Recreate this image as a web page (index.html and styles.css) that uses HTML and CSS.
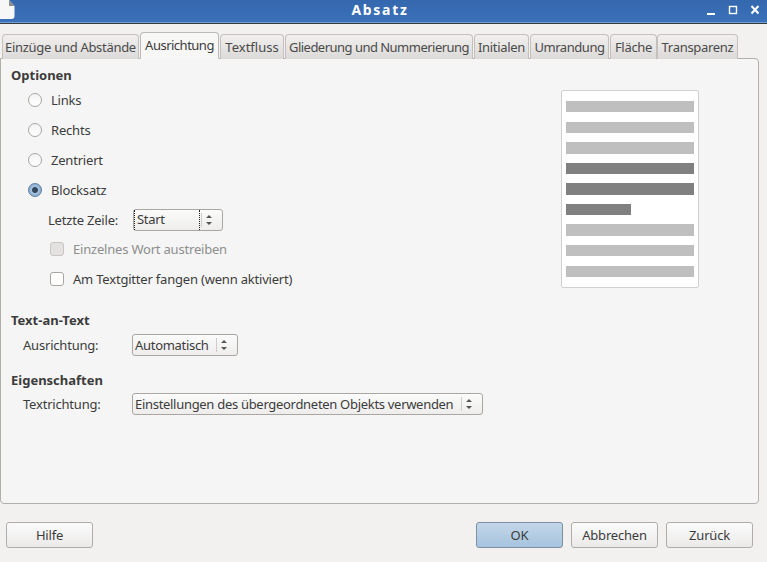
FILE: index.html
```html
<!DOCTYPE html>
<html>
  <head>
    <meta charset="utf-8">
    <title>Absatz</title>
    <link rel="stylesheet" href="styles.css">
  </head>
  <body class="body">
    <header class="titlebar">
      <svg class="app-icon" width="15" height="20" viewBox="0 0 15 20"><path d="M0 0H9L14.5 6V16Q14.5 19 11.5 19H0Z" fill="#f7f7f7"/><path d="M9 0L14.5 6H9Z" fill="#8d8d8d"/></svg>
      <span class="title">Absatz</span>
      <div class="win-controls">
        <svg width="52" height="16" viewBox="0 0 52 16">
          <path d="M0 12H8" stroke="#fff" stroke-width="2"/>
          <rect x="22.5" y="4.5" width="7" height="7" fill="none" stroke="#fff" stroke-width="1.4"/>
          <path d="M44.5 4L51.5 11.5M51.5 4L44.5 11.5" stroke="#fff" stroke-width="2"/>
        </svg>
      </div>
    </header>

    <nav class="tabs">
      <div class="tab tab-indents">Einzüge und Abstände</div>
      <div class="tab tab-active">Ausrichtung</div>
      <div class="tab tab-flow">Textfluss</div>
      <div class="tab tab-outline">Gliederung und Nummerierung</div>
      <div class="tab tab-initials">Initialen</div>
      <div class="tab tab-border">Umrandung</div>
      <div class="tab tab-area">Fläche</div>
      <div class="tab tab-trans">Transparenz</div>
    </nav>

    <main class="panel">
      <section class="options">
        <div class="options-left">
          <h2 class="heading">Optionen</h2>
          <label class="radio-row"><span class="radio"></span>Links</label>
          <label class="radio-row"><span class="radio"></span>Rechts</label>
          <label class="radio-row"><span class="radio"></span>Zentriert</label>
          <label class="radio-row"><span class="radio radio-on"></span>Blocksatz</label>
          <div class="last-line">
            <span class="last-line-label">Letzte Zeile:</span>
            <div class="combo combo-start combo-focus">
              <span class="combo-text">Start</span>
              <span class="spin"><svg width="8" height="14" viewBox="0 0 8 14"><path d="M1 5L4 2L7 5Z M1 9L4 12L7 9Z" fill="#555"/></svg></span>
            </div>
          </div>
          <label class="check-row check-off"><span class="check check-disabled"></span>Einzelnes Wort austreiben</label>
          <label class="check-row"><span class="check"></span>Am Textgitter fangen (wenn aktiviert)</label>
        </div>
        <div class="preview">
          <div class="bar"></div>
          <div class="bar"></div>
          <div class="bar"></div>
          <div class="bar bar-dark"></div>
          <div class="bar bar-dark"></div>
          <div class="bar bar-dark bar-short"></div>
          <div class="bar"></div>
          <div class="bar"></div>
          <div class="bar"></div>
        </div>
      </section>

      <h2 class="heading heading-text">Text-an-Text</h2>
      <div class="field">
        <span class="field-label">Ausrichtung:</span>
        <div class="combo combo-auto">
          <span class="combo-text">Automatisch</span>
          <span class="spin"><svg width="8" height="14" viewBox="0 0 8 14"><path d="M1 5L4 2L7 5Z M1 9L4 12L7 9Z" fill="#555"/></svg></span>
        </div>
      </div>

      <h2 class="heading heading-props">Eigenschaften</h2>
      <div class="field field-props">
        <span class="field-label">Textrichtung:</span>
        <div class="combo combo-dir">
          <span class="combo-text">Einstellungen des übergeordneten Objekts verwenden</span>
          <span class="spin"><svg width="8" height="14" viewBox="0 0 8 14"><path d="M1 5L4 2L7 5Z M1 9L4 12L7 9Z" fill="#555"/></svg></span>
        </div>
      </div>
    </main>

    <footer class="actions">
      <button class="button">Hilfe</button>
      <div class="actions-right">
        <button class="button button-ok">OK</button>
        <button class="button">Abbrechen</button>
        <button class="button">Zurück</button>
      </div>
    </footer>
  </body>
</html>
```

FILE: styles.css
```css
* {
  box-sizing: border-box;
}
.body {
  margin: 0;
  width: 767px;
  height: 562px;
  overflow: hidden;
  background: #f2f1f0;
  color: #3c3c3c;
  font-family: "Noto Sans", sans-serif;
  font-size: 13px;
  letter-spacing: -0.2px;
}

/* title bar */
.titlebar {
  position: relative;
  height: 24px;
  background: linear-gradient(#3467ae, #3b72ba);
  border-bottom: 1px solid #3a3a3a;
  box-shadow: inset 0 -1px 0 #6f9fd6;
  display: flex;
  align-items: center;
  justify-content: center;
}
.app-icon {
  position: absolute;
  left: 0;
  top: 0;
}
.title {
  margin-left: -7px;
  margin-top: -4px;
  color: #fff;
  font-weight: bold;
  font-size: 14px;
  letter-spacing: 1.7px;
}
.win-controls {
  position: absolute;
  right: 8px;
  top: 2px;
  height: 16px;
}

/* tabs */
.tabs {
  display: flex;
  height: 35px;
  padding: 8px 0 0 2px;
  align-items: flex-end;
  position: relative;
  z-index: 1;
  margin-bottom: -1px;
}
.tab {
  height: 25px;
  border: 1px solid #c4c0bc;
  border-bottom: none;
  border-radius: 4px 4px 0 0;
  background: linear-gradient(#f1f0ee, #dcdad8);
  color: #4a4a4a;
  text-align: center;
  line-height: 24px;
  white-space: nowrap;
  letter-spacing: -0.3px;
  margin-right: 1px;
}
.tab-indents { width: 137px; }
.tab-active {
  width: 79px;
  height: 27px;
  background: #f7f7f6;
  border-color: #bdb9b5;
  border-bottom: 1px solid #f5f5f5;
  color: #3c3c3c;
  line-height: 25px;
  letter-spacing: -0.5px;
}
.tab-flow { width: 64px; letter-spacing: 0; }
.tab-outline { width: 188px; letter-spacing: -0.52px; }
.tab-initials { width: 55px; }
.tab-border { width: 79px; letter-spacing: -0.45px; }
.tab-area { width: 47px; margin-right: 0; }
.tab-trans { width: 81px; }

/* main panel */
.panel {
  width: 759px;
  height: 446px;
  background: #f5f5f5;
  border: 1px solid #b3afab;
  border-radius: 0 4px 4px 4px;
  padding: 7px 0 0 10px;
}
.options {
  display: flex;
  justify-content: space-between;
  height: 230px;
}
.options-left {
  width: 400px;
}
.heading {
  margin: 0;
  font-size: 13px;
  font-weight: bold;
  line-height: 18px;
  letter-spacing: 0;
  color: #3c3c3c;
}
.radio-row {
  display: flex;
  align-items: center;
  height: 30px;
  padding-left: 17px;
}
.options-left .heading {
  margin-bottom: 1px;
}
.radio {
  width: 14px;
  height: 14px;
  margin-right: 9px;
  border-radius: 50%;
  border: 1px solid #a9a5a1;
  background: linear-gradient(#f3f3f3, #fff);
}
.radio-on {
  border-color: #5b7da3;
  background: radial-gradient(circle, #33475f 0, #33475f 2.5px, #a8c3de 3.5px, #7fa3c9 7px);
}
.last-line {
  display: flex;
  align-items: center;
  height: 22px;
  margin-top: 4px;
  padding-left: 37px;
}
.last-line-label {
  width: 85px;
}
.combo {
  display: flex;
  align-items: center;
  justify-content: space-between;
  background: linear-gradient(#fbfbfb, #eeedec);
  border: 1px solid #aaa6a2;
  border-radius: 3px;
  height: 22px;
  padding: 0 9px 0 2px;
  white-space: nowrap;
  letter-spacing: -0.3px;
}
.combo-start { width: 90px; }
.combo-auto { width: 106px; }
.combo-dir { width: 351px; }
.combo-focus .combo-text {
  width: 66px;
  height: 20px;
  line-height: 19px;
  padding-left: 2px;
  margin-left: -2px;
  border-left: 1px dotted #222;
  border-right: 1px dotted #222;
}
.spin {
  display: flex;
  align-items: center;
  height: 14px;
  padding-left: 3px;
  border-left: 1px solid #cfccc9;
}
.check-row {
  display: flex;
  align-items: center;
  height: 30px;
  padding-left: 39px;
}
.last-line + .check-row {
  margin-top: 3px;
}
.check {
  width: 14px;
  height: 14px;
  margin-right: 9px;
  background: #fff;
  border: 1px solid #a9a5a1;
  border-radius: 3px;
}
.check-off {
  color: #8e8e8e;
}
.check-disabled {
  background: #e3e2e1;
  border-color: #c8c5c2;
}

/* paragraph preview */
.preview {
  display: flex;
  flex-direction: column;
  gap: 9.18px;
  width: 138px;
  height: 198px;
  margin: 24px 59px 0 0;
  padding: 10px 4px 0;
  background: #fff;
  border: 1px solid #d0d0d0;
  border-radius: 2px;
}
.bar {
  flex: none;
  height: 11.4px;
  background: #bfbfbf;
}
.bar-dark {
  background: #808080;
}
.bar-short {
  width: 65px;
}

/* lower fields */
.heading-text {
  margin-top: 15px;
}
.heading-props {
  margin-top: 15px;
}
.field {
  display: flex;
  align-items: center;
  padding-left: 12px;
  margin-top: 5px;
}
.field-props {
  margin-top: 4px;
}
.field-label {
  width: 109px;
}

/* dialog buttons */
.actions {
  display: flex;
  justify-content: space-between;
  padding: 18px 14px 0 6px;
}
.actions-right {
  display: flex;
  gap: 8px;
}
.button {
  width: 87px;
  height: 26px;
  padding: 0;
  font: inherit;
  letter-spacing: inherit;
  color: #3c3c3c;
  background: linear-gradient(#fbfbfb, #ebeae9);
  border: 1px solid #b0aca8;
  border-radius: 3px;
}
.button-ok {
  background: linear-gradient(#c3d6e8, #a6c3de);
  border-color: #7c8fa3;
}
```
